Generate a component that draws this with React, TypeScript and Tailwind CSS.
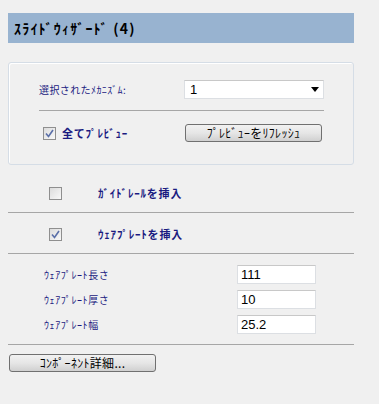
import React from "react";

const jp = { fontFamily: '"Noto Sans CJK JP", "Noto Sans", sans-serif' };
const lat = { fontFamily: '"Liberation Sans", Arial, sans-serif' };

function Check({ checked }: { checked?: boolean }) {
  return (
    <div className="w-[13px] h-[13px] border border-[#8f8f8f] bg-gradient-to-br from-[#dcdcdc] to-[#f8f8f8] flex items-center justify-center shrink-0">
      {checked && (
        <svg width="9" height="9" viewBox="0 0 9 9">
          <path d="M1 4.5 L3.5 7.5 L8 1" stroke="#5a6fa8" strokeWidth="1.6" fill="none" />
        </svg>
      )}
    </div>
  );
}

function Btn({ children, w }: { children: React.ReactNode; w: string }) {
  return (
    <div
      className={`${w} h-[18px] border border-[#707070] rounded-[3px] bg-gradient-to-b from-[#f2f2f2] via-[#e6e6e6] to-[#d0d0d0] flex items-center justify-center text-[12px] tracking-[0.3px] text-black leading-none`}
      style={jp}
    >
      {children}
    </div>
  );
}

function Field({ label, value }: { label: string; value: string }) {
  return (
    <div className="flex items-center h-[19px]">
      <div className="w-[229px] text-[10px] tracking-[0.6px] text-[#1a1a80] pl-[36px]" style={jp}>
        {label}
      </div>
      <div
        className="w-[79px] h-[19px] bg-white border border-[#dcdfe3] border-t-[#c8c8c8] flex items-center pl-[3px] text-[13px] text-black"
        style={lat}
      >
        {value}
      </div>
    </div>
  );
}

export default function App() {
  return (
    <div className="w-[379px] h-[404px] bg-[#f0f0f0] pt-[13px] overflow-hidden">
      <div className="ml-[8px] w-[346px] flex flex-col">
        <div className="h-[30px] bg-[#98b3d0] flex items-center pl-[6px]">
          <span className="text-[14px] tracking-[1.2px] font-bold text-black" style={jp}>
            ｽﾗｲﾄﾞｳｨｻﾞｰﾄﾞ (4)
          </span>
        </div>

        <div className="mt-[19px] h-[103px] border border-[#d5dde6] rounded-[3px] shadow-[inset_1px_1px_0_#ffffff] pl-[30px] pr-[29px] pt-[17px]">
          <div className="flex items-center justify-between h-[19px]">
            <span className="text-[10px] tracking-[0.4px] text-[#1a1a80]" style={jp}>
              選択されたﾒｶﾆｽﾞﾑ:
            </span>
            <div className="w-[140px] h-[19px] bg-white border border-[#dcdfe3] border-t-[#c8c8c8] flex items-center justify-between pl-[5px] pr-[4px]">
              <span className="text-[13px] text-black" style={lat}>
                1
              </span>
              <svg width="8" height="5" viewBox="0 0 8 5">
                <path d="M0 0 H8 L4 5 Z" fill="#000" />
              </svg>
            </div>
          </div>
          <div className="mt-[11px] h-px bg-[#a6a6a6]" />
          <div className="mt-[13px] flex items-center justify-between pl-[4px] pr-[2px]">
            <div className="flex items-center gap-[6px]">
              <Check checked />
              <span className="text-[11px] tracking-[0.8px] font-bold text-[#1a1a80]" style={jp}>
                全てﾌﾟﾚﾋﾞｭｰ
              </span>
            </div>
            <Btn w="w-[137px]">ﾌﾟﾚﾋﾞｭｰをﾘﾌﾚｯｼｭ</Btn>
          </div>
        </div>

        <div className="mt-[22px] flex items-center h-[13px] pl-[41px]">
          <Check />
          <span className="ml-[36px] text-[11px] tracking-[0.8px] font-bold text-[#1a1a80]" style={jp}>
            ｶﾞｲﾄﾞﾚｰﾙを挿入
          </span>
        </div>
        <div className="mt-[12px] h-px bg-[#a6a6a6]" />
        <div className="mt-[15px] flex items-center h-[13px] pl-[41px]">
          <Check checked />
          <span className="ml-[36px] text-[11px] tracking-[0.8px] font-bold text-[#1a1a80]" style={jp}>
            ｳｪｱﾌﾟﾚｰﾄを挿入
          </span>
        </div>
        <div className="mt-[12px] h-px bg-[#a6a6a6]" />

        <div className="mt-[11px] flex flex-col gap-[6px]">
          <Field label="ｳｪｱﾌﾟﾚｰﾄ長さ" value="111" />
          <Field label="ｳｪｱﾌﾟﾚｰﾄ厚さ" value="10" />
          <Field label="ｳｪｱﾌﾟﾚｰﾄ幅" value="25.2" />
        </div>
        <div className="mt-[10px] h-px bg-[#a6a6a6]" />
        <div className="mt-[9px] ml-[1px]">
          <Btn w="w-[147px]">ｺﾝﾎﾟｰﾈﾝﾄ詳細...</Btn>
        </div>
      </div>
    </div>
  );
}
